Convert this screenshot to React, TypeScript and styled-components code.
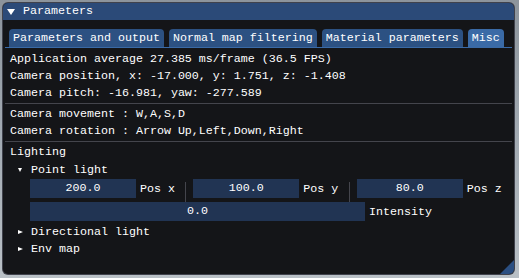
import React from "react";
import styled, { createGlobalStyle } from "styled-components";

const Global = createGlobalStyle`
  html, body { margin: 0; padding: 0; }
  body {
    width: 519px;
    height: 278px;
    overflow: hidden;
    background: linear-gradient(180deg, #8c949c 0%, #a3abb3 50%, #b9c0c6 100%);
    font-family: "Liberation Mono", "DejaVu Sans Mono", monospace;
    font-size: 11.67px;
    color: #ffffff;
  }
`;

const Page = styled.div`
  padding: 2px 0 0 2px;
`;

const Window = styled.div`
  position: relative;
  box-sizing: border-box;
  width: 513px;
  height: 273px;
  background: #141518;
  border: 1px solid rgba(100, 104, 120, 0.55);
  border-radius: 6px;
  overflow: hidden;
  display: flex;
  flex-direction: column;
`;

const TitleBar = styled.div`
  height: 17px;
  background: #2b4a78;
  display: flex;
  align-items: center;
  gap: 8px;
  padding-left: 4px;
  line-height: 17px;
`;

const DownTri = styled.span<{ $w: number; $h: number }>`
  display: inline-block;
  width: 0;
  height: 0;
  border-left: ${(p) => p.$w / 2}px solid transparent;
  border-right: ${(p) => p.$w / 2}px solid transparent;
  border-top: ${(p) => p.$h}px solid #ffffff;
`;

const RightTri = styled.span`
  display: inline-block;
  width: 0;
  height: 0;
  border-top: 2.5px solid transparent;
  border-bottom: 2.5px solid transparent;
  border-left: 5px solid #ffffff;
`;

const Body = styled.div`
  padding: 9px 2px 0 7px;
  display: flex;
  flex-direction: column;
`;

const TabBar = styled.div`
  display: flex;
  gap: 5px;
  margin-left: -5px;
  padding-left: 4px;
  border-bottom: 1px solid #3a6aa6;
`;

const Tab = styled.div<{ $active?: boolean }>`
  height: 18px;
  line-height: 18px;
  padding: 0 4px;
  border-radius: 4px 4px 0 0;
  background: ${(p) => (p.$active ? "#3a6aa6" : "#2c5182")};
  white-space: pre;
`;

const Line = styled.div<{ $first?: boolean }>`
  height: 17px;
  line-height: 17px;
  white-space: pre;
  margin-top: ${(p) => (p.$first ? "3px" : "0")};
`;

const HSep = styled.div`
  height: 1px;
  background: #44454c;
  margin: 1px 0 2px -5px;
`;

const TreeNode = styled.div<{ $gap?: number }>`
  height: 17px;
  display: flex;
  align-items: center;
  gap: 8px;
  padding-left: 7px;
  white-space: pre;
  margin-top: ${(p) => p.$gap ?? 0}px;
`;

const ArrowBox = styled.span`
  width: 6px;
  display: flex;
  justify-content: center;
`;

const InputRow = styled.div<{ $top: number }>`
  display: flex;
  align-items: flex-start;
  height: 19px;
  margin-top: ${(p) => p.$top}px;
  padding-left: 20px;
`;

const Group = styled.div<{ $w?: number }>`
  width: ${(p) => (p.$w ? `${p.$w}px` : "auto")};
  display: flex;
  align-items: center;
  gap: 4px;
  height: 19px;
`;

const Field = styled.div<{ $w: number }>`
  width: ${(p) => p.$w}px;
  height: 19px;
  line-height: 19px;
  background: #213453;
  text-align: center;
  white-space: pre;
`;

const Label = styled.span`
  white-space: pre;
`;

const VSep = styled.div`
  width: 1px;
  height: 21px;
  margin-top: 3px;
  margin-right: 7px;
  background: #44454c;
`;

const Grip = styled.div`
  position: absolute;
  right: 0;
  bottom: 0;
  width: 14px;
  height: 14px;
  background: #2b4f82;
  clip-path: polygon(100% 0, 100% 100%, 0 100%);
`;

const tabs = [
  "Parameters and output",
  "Normal map filtering",
  "Material parameters",
  "Misc",
];

const positions = [
  { v: "200.0", l: "Pos x" },
  { v: "100.0", l: "Pos y" },
  { v: "80.0", l: "Pos z" },
];

export default function App() {
  return (
    <>
      <Global />
      <Page>
        <Window>
          <TitleBar>
            <DownTri $w={8} $h={6} />
            <span>Parameters</span>
          </TitleBar>
          <Body>
            <TabBar>
              {tabs.map((t) => (
                <Tab key={t} $active={t === "Misc"}>
                  {t}
                </Tab>
              ))}
            </TabBar>
            <Line $first>Application average 27.385 ms/frame (36.5 FPS)</Line>
            <Line>Camera position, x: -17.000, y: 1.751, z: -1.408</Line>
            <Line>Camera pitch: -16.981, yaw: -277.589</Line>
            <HSep />
            <Line>Camera movement : W,A,S,D</Line>
            <Line>Camera rotation : Arrow Up,Left,Down,Right</Line>
            <HSep />
            <Line>Lighting</Line>
            <TreeNode>
              <ArrowBox>
                <DownTri $w={5} $h={4} />
              </ArrowBox>
              <span>Point light</span>
            </TreeNode>
            <InputRow $top={1}>
              {positions.map((p, i) => (
                <React.Fragment key={p.l}>
                  <Group $w={155.5}>
                    <Field $w={106}>{p.v}</Field>
                    <Label>{p.l}</Label>
                  </Group>
                  {i < positions.length - 1 && <VSep />}
                </React.Fragment>
              ))}
            </InputRow>
            <InputRow $top={4}>
              <Group>
                <Field $w={335}>0.0</Field>
                <Label>Intensity</Label>
              </Group>
            </InputRow>
            <TreeNode $gap={2}>
              <ArrowBox>
                <RightTri />
              </ArrowBox>
              <span>Directional light</span>
            </TreeNode>
            <TreeNode>
              <ArrowBox>
                <RightTri />
              </ArrowBox>
              <span>Env map</span>
            </TreeNode>
          </Body>
          <Grip />
        </Window>
      </Page>
    </>
  );
}
